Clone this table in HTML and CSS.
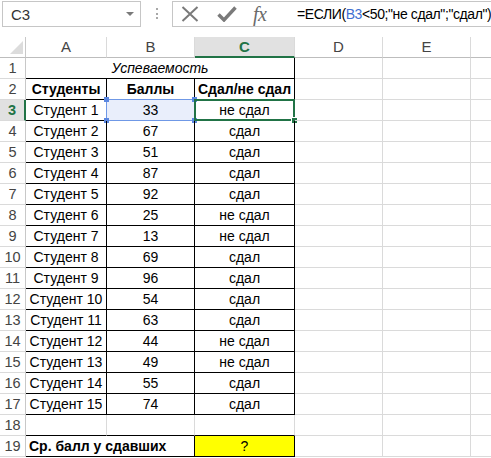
FILE: index.html
```html
<!DOCTYPE html>
<html lang="ru">
<head>
<meta charset="utf-8">
<title>Excel</title>
<link rel="stylesheet" href="styles.css">
</head>
<body>
<div class="fbar">
  <div class="namebox"><span class="nb-text">C3</span><span class="dd"></span></div>
  <div class="grip"><i></i><i></i><i></i></div>
  <div class="fxbox">
    <div class="btns">
      <svg class="ic-x" width="18" height="16" viewBox="0 0 18 16"><path d="M1.5 1 L16.5 15 M16.5 1 L1.5 15" stroke="#7a7a7a" stroke-width="2" fill="none"/></svg>
      <svg class="ic-ok" width="20" height="16" viewBox="0 0 20 16"><path d="M1.5 8.5 L7 14 L18.5 1.5" stroke="#7a7a7a" stroke-width="3.4" fill="none"/></svg>
      <span class="fx">fx</span>
    </div>
    <div class="formula">=ЕСЛИ(<span class="ref">B3</span>&lt;50;"не сдал";"сдал")</div>
  </div>
</div>
<div class="sheet">
  <div class="corner"><span class="tri"></span></div>
  <div class="ch">A</div><div class="ch">B</div><div class="ch act">C</div><div class="ch">D</div><div class="ch">E</div><div class="ch last"></div>

  <div class="rh">1</div><div class="c tb span3 it ctr">Успеваемость</div><div class="c"></div><div class="c"></div><div class="c last"></div>

  <div class="rh">2</div><div class="c tb ctr b">Студенты</div><div class="c tb ctr b">Баллы</div><div class="c tb ctr b">Сдал/не сдал</div><div class="c"></div><div class="c"></div><div class="c last"></div>

  <div class="rh act">3</div><div class="c tb ctr">Студент 1</div><div class="c tb ctr ref-cell">33<span class="refbox"><i class="k1"></i><i class="k2"></i><i class="k3"></i><i class="k4"></i></span></div><div class="c tb ctr selcell">не сдал<span class="sel"></span><span class="handle"></span></div><div class="c"></div><div class="c"></div><div class="c last"></div>

  <div class="rh">4</div><div class="c tb ctr">Студент 2</div><div class="c tb ctr">67</div><div class="c tb ctr">сдал</div><div class="c"></div><div class="c"></div><div class="c last"></div>
  <div class="rh">5</div><div class="c tb ctr">Студент 3</div><div class="c tb ctr">51</div><div class="c tb ctr">сдал</div><div class="c"></div><div class="c"></div><div class="c last"></div>
  <div class="rh">6</div><div class="c tb ctr">Студент 4</div><div class="c tb ctr">87</div><div class="c tb ctr">сдал</div><div class="c"></div><div class="c"></div><div class="c last"></div>
  <div class="rh">7</div><div class="c tb ctr">Студент 5</div><div class="c tb ctr">92</div><div class="c tb ctr">сдал</div><div class="c"></div><div class="c"></div><div class="c last"></div>
  <div class="rh">8</div><div class="c tb ctr">Студент 6</div><div class="c tb ctr">25</div><div class="c tb ctr">не сдал</div><div class="c"></div><div class="c"></div><div class="c last"></div>
  <div class="rh">9</div><div class="c tb ctr">Студент 7</div><div class="c tb ctr">13</div><div class="c tb ctr">не сдал</div><div class="c"></div><div class="c"></div><div class="c last"></div>
  <div class="rh">10</div><div class="c tb ctr">Студент 8</div><div class="c tb ctr">69</div><div class="c tb ctr">сдал</div><div class="c"></div><div class="c"></div><div class="c last"></div>
  <div class="rh">11</div><div class="c tb ctr">Студент 9</div><div class="c tb ctr">96</div><div class="c tb ctr">сдал</div><div class="c"></div><div class="c"></div><div class="c last"></div>
  <div class="rh">12</div><div class="c tb ctr">Студент 10</div><div class="c tb ctr">54</div><div class="c tb ctr">сдал</div><div class="c"></div><div class="c"></div><div class="c last"></div>
  <div class="rh">13</div><div class="c tb ctr">Студент 11</div><div class="c tb ctr">63</div><div class="c tb ctr">сдал</div><div class="c"></div><div class="c"></div><div class="c last"></div>
  <div class="rh">14</div><div class="c tb ctr">Студент 12</div><div class="c tb ctr">44</div><div class="c tb ctr">не сдал</div><div class="c"></div><div class="c"></div><div class="c last"></div>
  <div class="rh">15</div><div class="c tb ctr">Студент 13</div><div class="c tb ctr">49</div><div class="c tb ctr">не сдал</div><div class="c"></div><div class="c"></div><div class="c last"></div>
  <div class="rh">16</div><div class="c tb ctr">Студент 14</div><div class="c tb ctr">55</div><div class="c tb ctr">сдал</div><div class="c"></div><div class="c"></div><div class="c last"></div>
  <div class="rh">17</div><div class="c tb ctr">Студент 15</div><div class="c tb ctr">74</div><div class="c tb ctr">сдал</div><div class="c"></div><div class="c"></div><div class="c last"></div>

  <div class="rh">18</div><div class="c bb"></div><div class="c bb"></div><div class="c bb"></div><div class="c"></div><div class="c"></div><div class="c last"></div>

  <div class="rh">19</div><div class="c tb span2 b lft">Ср. балл у сдавших</div><div class="c tb ctr yel">?</div><div class="c"></div><div class="c"></div><div class="c last"></div>
</div>
</body>
</html>
```
FILE: styles.css
```css
html, body {
  margin: 0;
  padding: 0;
  background: #fff;
}
body {
  width: 491px;
  height: 458px;
  overflow: hidden;
  font-family: "Liberation Sans", Arial, sans-serif;
  font-size: 14px;
  color: #000;
}

/* ---------- formula bar ---------- */
.fbar {
  height: 37px;
  display: flex;
  align-items: flex-start;
}
.namebox {
  box-sizing: border-box;
  flex: 0 0 139px;
  margin: 1px 0 0 2px;
  height: 26px;
  border: 1px solid #c6c6c6;
  display: flex;
  align-items: center;
  padding-left: 8px;
  color: #333;
  font-size: 15px;
}
.dd {
  margin-left: auto;
  margin-right: 6px;
  width: 0;
  height: 0;
  border-left: 4px solid transparent;
  border-right: 4px solid transparent;
  border-top: 4px solid #7a7a7a;
}
.grip {
  flex: 0 0 31px;
  height: 27px;
  display: flex;
  flex-direction: column;
  align-items: center;
  justify-content: center;
  gap: 2.5px;
}
.grip i {
  display: block;
  width: 2px;
  height: 2px;
  background: #a8a8a8;
}
.fxbox {
  box-sizing: border-box;
  margin-top: 1px;
  flex: 1 1 auto;
  min-width: 0;
  overflow: hidden;
  height: 26px;
  border: 1px solid #c6c6c6;
  border-right: none;
  display: flex;
  align-items: center;
}
.btns {
  box-sizing: border-box;
  flex: 0 0 110px;
  height: 100%;
  display: flex;
  align-items: center;
  padding-left: 8px;
}
.ic-x { flex: 0 0 auto; margin-right: 18px; }
.ic-ok { flex: 0 0 auto; margin-right: 16px; }
.fx {
  font-family: "Liberation Serif", "Times New Roman", serif;
  font-style: italic;
  font-size: 20px;
  color: #6a6a6a;
  letter-spacing: -0.5px;
  line-height: 20px;
}
.formula {
  padding-left: 14px;
  font-size: 14px;
  letter-spacing: -0.4px;
  white-space: nowrap;
  color: #000;
}
.ref { color: #3f6fd1; }

/* ---------- sheet grid ---------- */
.sheet {
  display: grid;
  grid-template-columns: 26px 81px 88px 100px 88px 88px 1fr;
  grid-auto-rows: 21px;
}
.sheet > div {
  box-sizing: border-box;
  white-space: nowrap;
  overflow: visible;
}
.corner {
  position: relative;
  border-right: 1px solid #c8c8c8;
  border-bottom: 1px solid #bdbdbd;
}
.tri {
  position: absolute;
  right: 2px;
  bottom: 3px;
  width: 0;
  height: 0;
  border-left: 13px solid transparent;
  border-bottom: 13px solid #dcdcdc;
}
.ch {
  border-right: 1px solid #dadada;
  border-bottom: 1px solid #bdbdbd;
  text-align: center;
  color: #444;
  font-size: 15px;
  line-height: 20px;
}
.ch.act {
  background: #e1e1e1;
  color: #217346;
  font-weight: bold;
  border-bottom: 2px solid #217346;
}
.ch.last, .c.last { border-right: none; }
.rh {
  border-right: 1px solid #c8c8c8;
  border-bottom: 1px solid #dadada;
  text-align: center;
  color: #444;
  font-size: 14.5px;
  line-height: 21px;
}
.rh.act {
  background: #e1e1e1;
  color: #217346;
  font-weight: bold;
  border-right: 2px solid #217346;
}
.c {
  border-right: 1px solid #dadada;
  border-bottom: 1px solid #dadada;
  line-height: 21px;
  position: relative;
}
.tb {
  border-right-color: #000;
  border-bottom-color: #000;
}
.bb { border-bottom-color: #000; }
.span3 { grid-column: span 3; }
.span2 { grid-column: span 2; }
.ctr { text-align: center; }
.lft { padding-left: 3px; }
.b { font-weight: bold; }
.it { font-style: italic; }
.yel { background: #ffff00; }

/* active cell C3 */
.sel {
  position: absolute;
  left: -1px;
  top: -1px;
  right: -1px;
  bottom: -1px;
  border: 2px solid #217346;
}
.handle {
  position: absolute;
  right: -4px;
  bottom: -4px;
  width: 5px;
  height: 5px;
  background: #217346;
  border: 1px solid #fff;
}

/* referenced cell B3 */
.ref-cell { background: #e9eefb; }
.refbox {
  position: absolute;
  left: -1px;
  top: -1px;
  right: -1px;
  bottom: -1px;
  border: 1.5px solid #6f98e6;
}
.refbox i {
  position: absolute;
  width: 5px;
  height: 5px;
  background: #5b87e0;
}
.refbox .k1 { left: -3px; top: -3px; }
.refbox .k2 { right: -3px; top: -3px; }
.refbox .k3 { left: -3px; bottom: -3px; }
.refbox .k4 { right: -3px; bottom: -3px; }
```
